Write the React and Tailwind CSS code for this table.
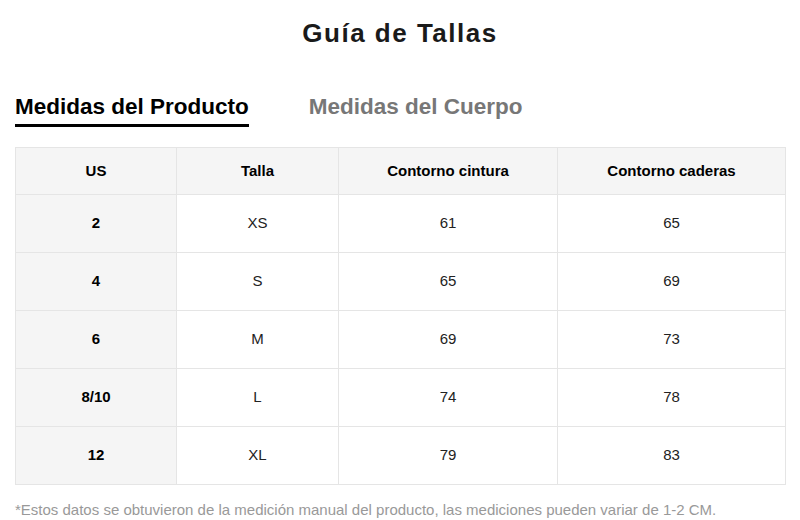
import React from "react";

const rows = [
  ["2", "XS", "61", "65"],
  ["4", "S", "65", "69"],
  ["6", "M", "69", "73"],
  ["8/10", "L", "74", "78"],
  ["12", "XL", "79", "83"],
];

const SizeGuide = () => {
  return (
    <div
      className="w-[800px] h-[520px] bg-white text-[#222] px-[15px]"
      style={{ fontFamily: '"Liberation Sans", Arial, sans-serif' }}
    >
      <h2 className="pt-[18px] text-center text-[26px] leading-[30px] font-extrabold tracking-[1.5px] text-[#1a1a1a]">
        Guía de Tallas
      </h2>

      <div className="mt-[46px] flex gap-[60px]">
        <div className="text-[22.5px] leading-[26px] font-bold text-black pb-[4px] border-b-[3px] border-black">
          Medidas del Producto
        </div>
        <div className="text-[22.5px] leading-[26px] font-bold text-[#777]">
          Medidas del Cuerpo
        </div>
      </div>

      <table className="mt-[20px] w-[770px] border-collapse table-fixed text-[15px] text-center">
        <colgroup>
          <col className="w-[161px]" />
          <col className="w-[162px]" />
          <col className="w-[219px]" />
          <col className="w-[228px]" />
        </colgroup>
        <thead>
          <tr className="h-[47px] bg-[#f5f5f5] text-black">
            <th className="border border-[#e5e5e5] font-bold pt-[1px]">US</th>
            <th className="border border-[#e5e5e5] font-bold pt-[1px]">Talla</th>
            <th className="border border-[#e5e5e5] font-bold pt-[1px]">Contorno cintura</th>
            <th className="border border-[#e5e5e5] font-bold pt-[1px]">Contorno caderas</th>
          </tr>
        </thead>
        <tbody>
          {rows.map((r) => (
            <tr key={r[0]} className="h-[58px]">
              <td className="border border-[#e5e5e5] bg-[#f5f5f5] font-bold text-black">{r[0]}</td>
              <td className="border border-[#e5e5e5]">{r[1]}</td>
              <td className="border border-[#e5e5e5]">{r[2]}</td>
              <td className="border border-[#e5e5e5]">{r[3]}</td>
            </tr>
          ))}
        </tbody>
      </table>

      <p className="mt-[16px] text-[15px] leading-[18px] text-[#999]">
        *Estos datos se obtuvieron de la medición manual del producto, las mediciones pueden variar de 1-2 CM.
      </p>
    </div>
  );
};

export default function App() {
  return <SizeGuide />;
}
